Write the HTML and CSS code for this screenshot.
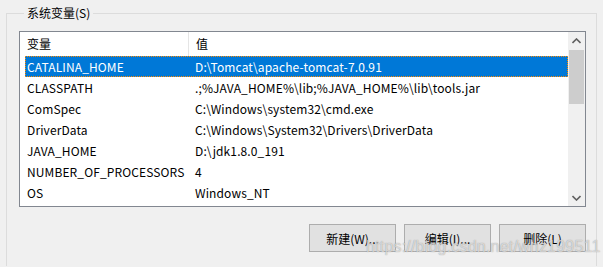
FILE: index.html
```html
<!DOCTYPE html>
<html lang="zh-CN">
<head>
    <meta charset="UTF-8">
    <title>系统变量</title>
    <link rel="stylesheet" href="styles.css">
</head>
<body>
    <fieldset class="group">
        <legend>系统变量(S)</legend>

        <div class="listview">
            <div class="list-main">
                <div class="list-header">
                    <div class="hcell hcell-name">变量</div>
                    <div class="hcell hcell-value">值</div>
                </div>
                <div class="row selected">
                    <span class="cell-name">CATALINA_HOME</span>
                    <span class="cell-value">D:\Tomcat\apache-tomcat-7.0.91</span>
                </div>
                <div class="row">
                    <span class="cell-name">CLASSPATH</span>
                    <span class="cell-value">.;%JAVA_HOME%\lib;%JAVA_HOME%\lib\tools.jar</span>
                </div>
                <div class="row">
                    <span class="cell-name">ComSpec</span>
                    <span class="cell-value">C:\Windows\system32\cmd.exe</span>
                </div>
                <div class="row">
                    <span class="cell-name">DriverData</span>
                    <span class="cell-value">C:\Windows\System32\Drivers\DriverData</span>
                </div>
                <div class="row">
                    <span class="cell-name">JAVA_HOME</span>
                    <span class="cell-value">D:\jdk1.8.0_191</span>
                </div>
                <div class="row">
                    <span class="cell-name">NUMBER_OF_PROCESSORS</span>
                    <span class="cell-value">4</span>
                </div>
                <div class="row">
                    <span class="cell-name">OS</span>
                    <span class="cell-value">Windows_NT</span>
                </div>
            </div>

            <!-- vertical scrollbar -->
            <div class="scrollbar">
                <div class="sb-arrow">
                    <svg width="9" height="6" viewBox="0 0 9 6"><path d="M0.5 5 L4.5 1 L8.5 5" fill="none" stroke="#606060" stroke-width="1.6"/></svg>
                </div>
                <div class="sb-thumb"></div>
                <div class="sb-track"></div>
                <div class="sb-arrow">
                    <svg width="9" height="6" viewBox="0 0 9 6"><path d="M0.5 1 L4.5 5 L8.5 1" fill="none" stroke="#606060" stroke-width="1.6"/></svg>
                </div>
            </div>
        </div>

        <div class="button-group">
            <button>新建(W)...</button>
            <button>编辑(I)...</button>
            <button>删除(L)</button>
        </div>
    </fieldset>

    <div class="watermark">https://blog.csdn.net/whz199511</div>
</body>
</html>
```

FILE: styles.css
```css
body { margin: 0; background-color: #f0f0f0; color: #000; font-family: "Noto Sans CJK SC", "Noto Sans", sans-serif; font-size: 12px; height: 267px; overflow: hidden; }
.group { margin: 5px 6px 0 6px; padding: 10px 10px 14px 12px; border: 1px solid #dcdcdc; border-bottom: none; min-width: 0; }
.group legend { margin-left: 5px; padding: 0 3px; line-height: 16px; height: 16px; }

.listview { display: flex; height: 174px; border: 1px solid #828790; background-color: #fff; letter-spacing: 0.12px; }
.list-main { flex: 1; min-width: 0; }
.list-header { display: flex; height: 24px; line-height: 23px; }
.hcell-name { width: 161px; padding-left: 7px; border-right: 1px solid #e5e5e5; }
.hcell-value { padding-left: 7px; }

.row { display: flex; height: 21px; line-height: 19px; margin-left: 5px; box-sizing: border-box; border: 1px solid transparent; white-space: nowrap; }
.row .cell-name { width: 167px; padding-left: 1px; }
.row .cell-value { padding-left: 1px; }
.row.selected { background-color: #0078d7; color: #fff; border: 1px dotted #ff8a00; }

.scrollbar { width: 17px; display: flex; flex-direction: column; background-color: #f0f0f0; }
.sb-arrow { height: 17px; display: flex; align-items: center; justify-content: center; }
.sb-thumb { height: 54px; margin: 1px 1px 0 1px; background-color: #cdcdcd; }
.sb-track { flex: 1; }

.button-group { display: flex; justify-content: flex-end; gap: 8px; margin-top: 17px; }
.button-group button { width: 87px; height: 28px; padding: 0; border: 1px solid #adadad; background-color: #e1e1e1; font-family: inherit; font-size: 12px; color: #000; }

.watermark { position: absolute; left: 366px; top: 238px; font-family: "Liberation Sans", sans-serif; font-size: 16px; color: rgba(255, 255, 255, 0.6); text-shadow: 0 0 1px rgba(100, 100, 100, 0.7); letter-spacing: 0.2px; }
```
